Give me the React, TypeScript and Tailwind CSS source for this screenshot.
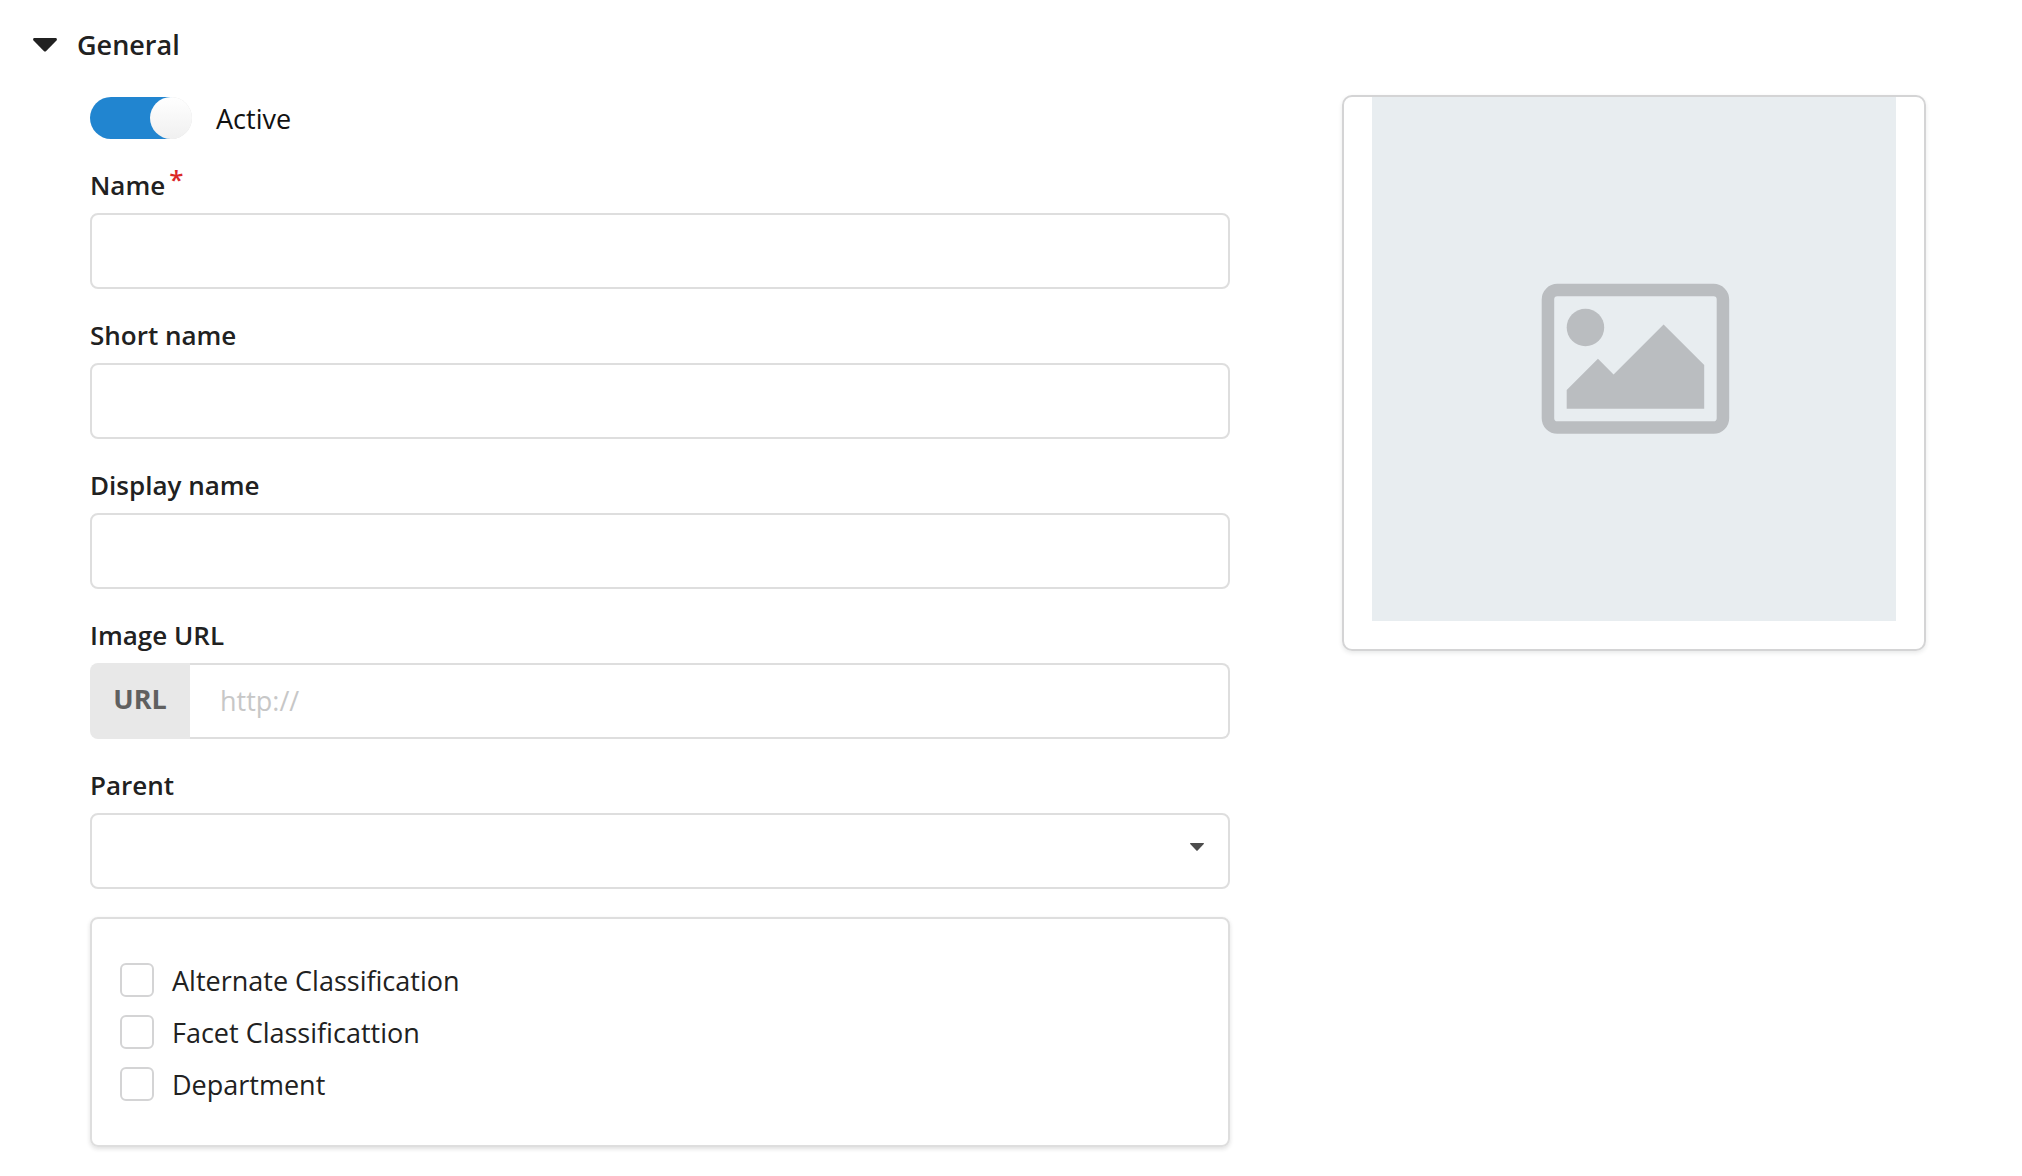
import { useState } from "react"

const inputClass =
  "h-[76px] w-full rounded-lg border-2 border-[#dedede] bg-white px-7 text-[27px] outline-none placeholder:text-[#c7c7c7] focus:border-[#85b7d9]"

const classifications = [
  { id: "alternate", label: "Alternate Classification" },
  { id: "facet", label: "Facet Classificattion" },
  { id: "department", label: "Department" },
]

interface FieldProps {
  id: string
  label: string
  required?: boolean
  children: React.ReactNode
}

function Field({ id, label, required, children }: FieldProps) {
  return (
    <div>
      <label htmlFor={id} className="mb-2.5 flex h-9 items-center text-[26px] leading-9 font-semibold">
        {label}
        {required && <span className="ml-1 self-start leading-6 text-[#db2828]">*</span>}
      </label>
      {children}
    </div>
  )
}

function ImagePlaceholder() {
  return (
    <div className="rounded-[10px] border-2 border-[#d4d4d5] px-7 pb-7 shadow-[0_2px_4px_rgba(34,36,38,0.10)]">
      <svg viewBox="0 0 524 524" className="block w-full bg-[#e8edf0]" role="img" aria-label="No image">
        <g transform="translate(169.7 186.8) scale(6.25)" fill="#babdc0">
          <path
            fillRule="evenodd"
            d="M2.5 0h25A2.5 2.5 0 0 1 30 2.5v19a2.5 2.5 0 0 1-2.5 2.5h-25A2.5 2.5 0 0 1 0 21.5v-19A2.5 2.5 0 0 1 2.5 0zM2.5 2a.5.5 0 0 0-.5.5v19a.5.5 0 0 0 .5.5h25a.5.5 0 0 0 .5-.5v-19a.5.5 0 0 0-.5-.5z"
          />
          <circle cx="7" cy="7" r="3" />
          <path d="M4 17l5-5 2.5 2.5 8-8L26 13v7H4z" />
        </g>
      </svg>
    </div>
  )
}

export default function App() {
  const [open, setOpen] = useState(true)
  const [active, setActive] = useState(true)

  return (
    <main className="min-h-screen bg-white pt-[25px] pb-7 font-['Open_Sans',sans-serif] text-[27px] text-[#212121]">
      <h2>
        <button
          type="button"
          aria-expanded={open}
          onClick={() => setOpen(!open)}
          className="flex h-10 items-center gap-5 pl-[33px] font-semibold"
        >
          <svg viewBox="0 0 24 14" className="h-3.5 w-6" fill="currentColor" aria-hidden="true">
            <path d="M1.5 0h21c1.3 0 1.9 1.4 1 2.4L13.2 13c-.7.7-1.7.7-2.4 0L.5 2.4C-.4 1.4.2 0 1.5 0z" />
          </svg>
          General
        </button>
      </h2>

      {open && (
        <div className="mt-[30px] grid grid-cols-[minmax(0,1140fr)_minmax(0,584fr)] items-start gap-28 pr-24 pl-[90px]">
          <form className="flex flex-col gap-7 pt-0.5">
            <label className="flex h-[42px] items-center gap-6 text-[#111111]">
              <input
                type="checkbox"
                role="switch"
                checked={active}
                onChange={(e) => setActive(e.target.checked)}
                className="flex h-[42px] w-[102px] appearance-none rounded-full bg-[#e0e0e0] before:size-[42px] before:rounded-full before:bg-linear-to-b before:from-white before:to-[#f0f0f0] checked:justify-end checked:bg-[linear-gradient(90deg,#2185d0_80%,transparent_80%)]"
              />
              <span className="pt-0.5">Active</span>
            </label>

            <Field id="name" label="Name" required>
              <input id="name" type="text" required className={inputClass} />
            </Field>
            <Field id="short-name" label="Short name">
              <input id="short-name" type="text" className={inputClass} />
            </Field>
            <Field id="display-name" label="Display name">
              <input id="display-name" type="text" className={inputClass} />
            </Field>
            <Field id="image-url" label="Image URL">
              <div className="flex">
                <span className="flex w-[100px] shrink-0 items-center justify-center rounded-l-lg bg-[#e8e8e8] pb-1 font-bold text-[#606060]">
                  URL
                </span>
                <input
                  id="image-url"
                  type="text"
                  placeholder="http://"
                  className="h-[76px] w-full rounded-r-lg border-2 border-l-0 border-[#dedede] bg-white px-[30px] pb-0.5 text-[27px] outline-none placeholder:text-[#c7c7c7]"
                />
              </div>
            </Field>
            <Field id="parent" label="Parent">
              <div className="relative">
                <select id="parent" className={`${inputClass} block appearance-none`}>
                  <option value=""></option>
                </select>
                <svg
                  viewBox="0 0 14 8"
                  className="pointer-events-none absolute top-[30px] right-[26px] h-2 w-3.5"
                  fill="#4d4d4d"
                  aria-hidden="true"
                >
                  <path d="M.6 0h12.8c.5 0 .8.6.4 1L7.6 7.6c-.3.4-.9.4-1.2 0L.2 1C-.2.6.1 0 .6 0z" />
                </svg>
              </div>
            </Field>

            <div className="flex flex-col gap-[18px] rounded-lg border-2 border-[#dedede] px-7 py-11 shadow-[0_2px_4px_rgba(34,36,38,0.14)]">
              {classifications.map((item) => (
                <label key={item.id} className="flex h-[34px] items-center gap-[18px]">
                  <input
                    type="checkbox"
                    name={item.id}
                    className="size-[34px] appearance-none rounded-md border-2 border-[#d4d4d5] bg-white checked:bg-[#2185d0]"
                  />
                  <span className="pt-0.5">{item.label}</span>
                </label>
              ))}
            </div>
          </form>

          <ImagePlaceholder />
        </div>
      )}
    </main>
  )
}
